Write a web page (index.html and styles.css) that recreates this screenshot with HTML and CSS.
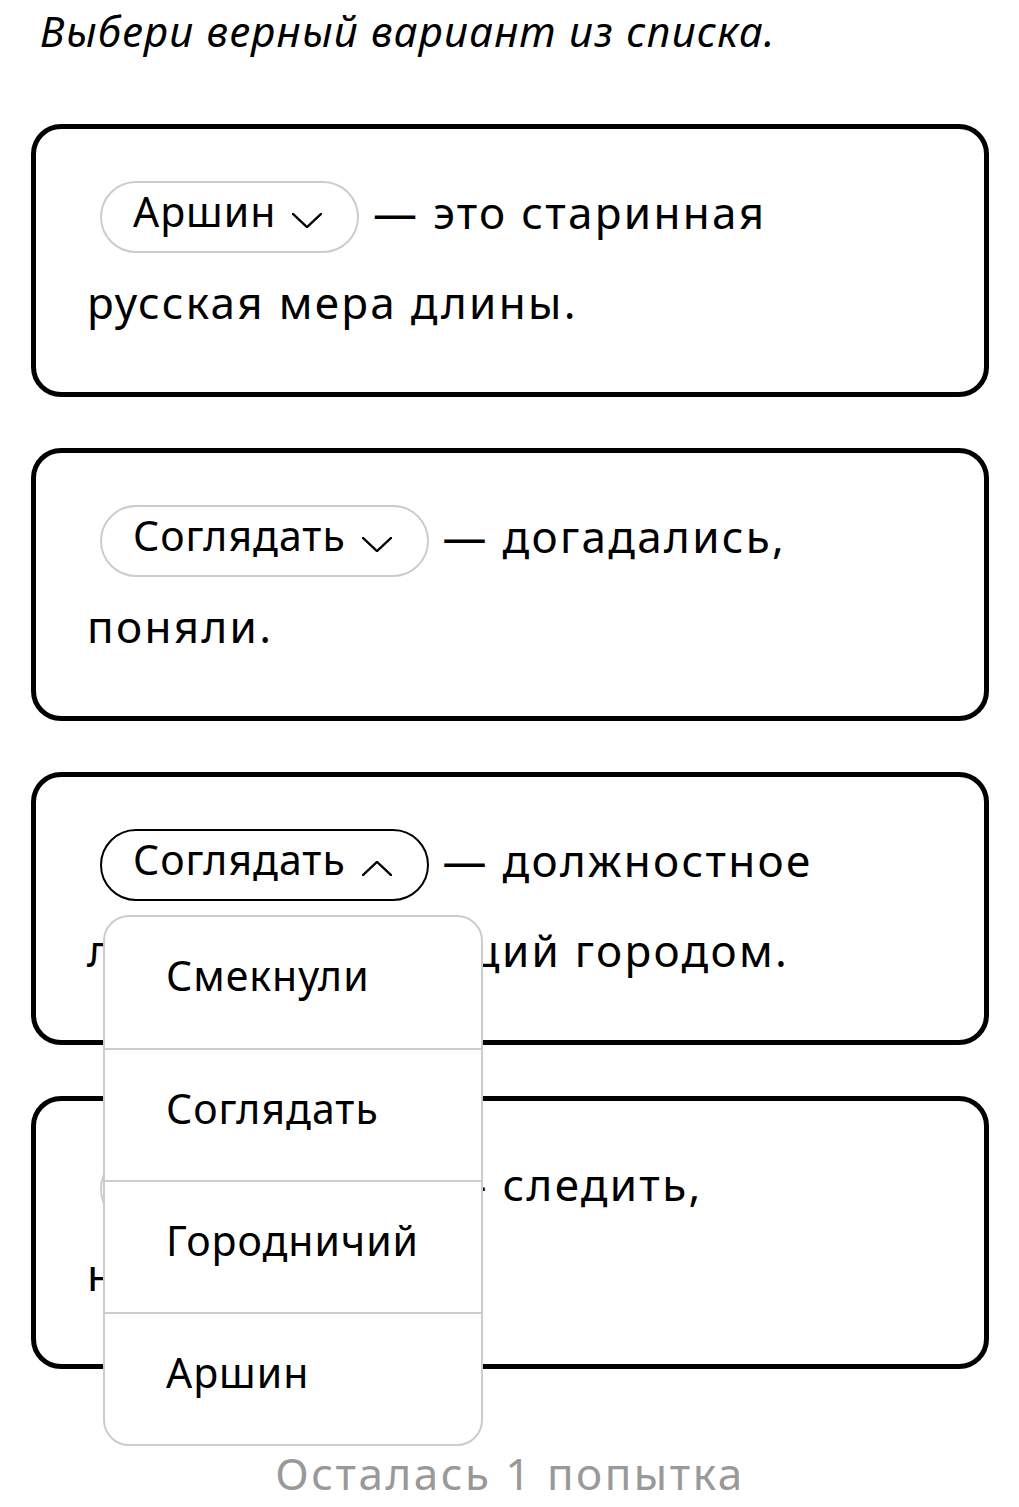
FILE: index.html
```html
<!DOCTYPE html>
<html lang="ru">
<head>
<meta charset="utf-8">
<link rel="stylesheet" href="styles.css">
</head>
<body>
<div class="page">
  <h1 class="title">Выбери верный вариант из списка.</h1>

  <div class="card">
    <p class="text"><span class="pill"><span class="pill-label">Аршин</span><svg class="chev" viewBox="0 0 32 16"><polyline points="1,1 16,15 31,1"/></svg></span> — это старинная<br>русская мера длины.</p>
  </div>

  <div class="card">
    <p class="text"><span class="pill"><span class="pill-label">Соглядать</span><svg class="chev" viewBox="0 0 32 16"><polyline points="1,1 16,15 31,1"/></svg></span> — догадались,<br>поняли.</p>
  </div>

  <div class="card">
    <p class="text"><span class="pill-wrap"><span class="pill pill-open"><span class="pill-label">Соглядать</span><svg class="chev" viewBox="0 0 32 16"><polyline points="1,15 16,1 31,15"/></svg></span><span class="menu">
      <span class="menu-item">Смекнули</span>
      <span class="menu-item">Соглядать</span>
      <span class="menu-item">Городничий</span>
      <span class="menu-item">Аршин</span>
    </span></span> — должностное<br>лицо, управляющий городом.</p>
  </div>

  <div class="card">
    <p class="text"><span class="pill"><span class="pill-label">Соглядать</span><svg class="chev" viewBox="0 0 32 16"><polyline points="1,1 16,15 31,1"/></svg></span> — следить,<br>наблюдать.</p>
  </div>

  <p class="attempts">Осталась 1 попытка</p>
</div>
</body>
</html>
```

FILE: styles.css
```css
* { box-sizing: border-box; }
html, body { margin: 0; padding: 0; background: #fff; }
body {
  font-family: "Noto Sans", "Open Sans", sans-serif;
  color: #000;
}
.page {
  width: 1019px;
  padding: 0 30px 0 31px;
}
.title {
  margin: 0;
  padding: 6px 0 0 9px;
  height: 124px;
  font-size: 42px;
  font-weight: 400;
  font-style: italic;
  line-height: 50px;
  letter-spacing: 1.2px;
}
.card {
  width: 958px;
  height: 273px;
  border: 5px solid #000;
  border-radius: 30px;
  background: #fff;
  padding: 38px 40px 0 51px;
  margin-bottom: 51px;
}
.text {
  margin: 0;
  font-size: 44px;
  line-height: 90px;
  letter-spacing: 2.3px;
  white-space: nowrap;
}
.pill-wrap {
  position: relative;
  display: inline-flex;
  vertical-align: middle;
  margin: 0 0 0 13px;
  letter-spacing: 0;
}
.pill {
  display: inline-flex;
  align-items: center;
  height: 72px;
  padding: 0 35px 0 31px;
  border: 2px solid #cccccc;
  border-radius: 36px;
  vertical-align: middle;
  margin: 0 0 0 13px;
  font-size: 41px;
  line-height: 1;
  letter-spacing: 1px;
}
.pill-wrap .pill { margin: 0; }
.pill-open { border: 2.5px solid #000; }
.pill-label { display: block; margin-bottom: 11px; }
.chev {
  width: 30px;
  height: 15px;
  margin-left: 16px;
  margin-top: 6px;
  fill: none;
  stroke: #000;
  stroke-width: 2.4;
  stroke-linecap: round;
  stroke-linejoin: round;
}
.menu {
  position: absolute;
  z-index: 5;
  left: 3px;
  top: 86px;
  width: 380px;
  display: flex;
  flex-direction: column;
  background: #fff;
  border: 2px solid #cccccc;
  border-radius: 26px;
  overflow: hidden;
}
.menu-item {
  display: flex;
  align-items: center;
  height: 132px;
  padding: 0 0 14px 61px;
  font-size: 41px;
  letter-spacing: 1px;
  line-height: 1;
  border-top: 2px solid #cccccc;
}
.menu-item:first-child { border-top: none; height: 131px; }
.attempts {
  margin: 76px 0 0 0;
  text-align: center;
  font-size: 44px;
  line-height: 56px;
  letter-spacing: 2.5px;
  color: #999999;
}
```
